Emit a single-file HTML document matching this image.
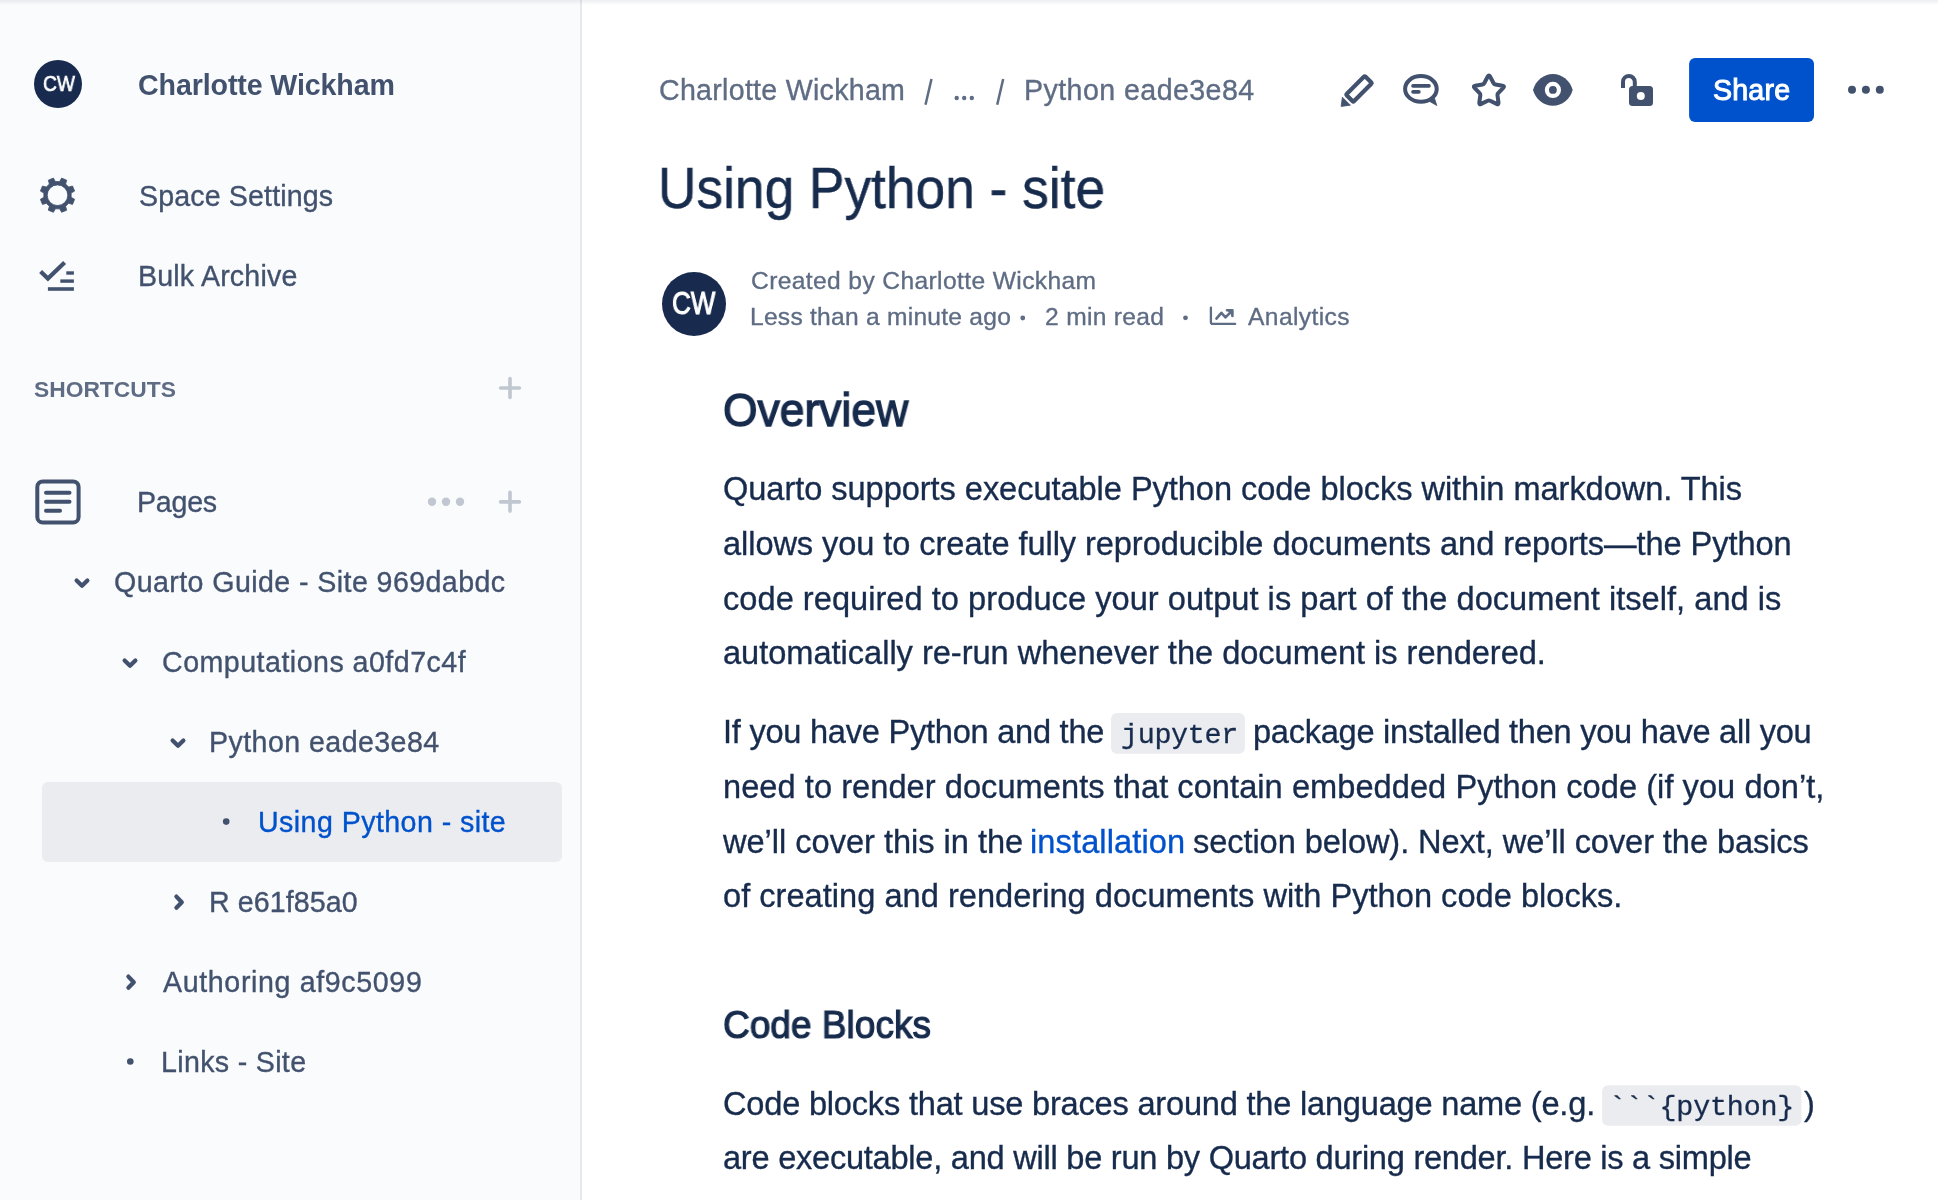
<!DOCTYPE html>
<html><head><meta charset="utf-8"><title>Using Python - site</title>
<style>
*{margin:0;padding:0;box-sizing:border-box;}
html,body{width:1938px;height:1200px;overflow:hidden;background:#fff;font-family:"Liberation Sans",sans-serif;}
.t{position:absolute;white-space:nowrap;will-change:transform;}
.bm{display:inline-block;width:0;height:0;vertical-align:baseline;}
</style></head>
<body>
<svg width="1938" height="1200" style="position:absolute;left:0;top:0">
<rect x="0" y="0" width="580" height="1200" fill="#FAFBFC"/>
<rect x="580" y="0" width="2" height="1200" fill="#E7E8E9"/>
<rect x="42" y="782" width="520" height="80" rx="6" fill="#EBECF0"/>
<circle cx="58" cy="84" r="24" fill="#182B4E"/>
<path d="M71.13,193.04 L74.61,191.09 L72.51,186.00 L68.66,187.09 L65.61,184.04 L66.70,180.19 L61.61,178.09 L59.66,181.57 L55.34,181.57 L53.39,178.09 L48.30,180.19 L49.39,184.04 L46.34,187.09 L42.49,186.00 L40.39,191.09 L43.87,193.04 L43.87,197.36 L40.39,199.31 L42.49,204.40 L46.34,203.31 L49.39,206.36 L48.30,210.21 L53.39,212.31 L55.34,208.83 L59.66,208.83 L61.61,212.31 L66.70,210.21 L65.61,206.36 L68.66,203.31 L72.51,204.40 L74.61,199.31 L71.13,197.36 Z M47.20,195.20 a10.30,10.30 0 1,0 20.60,0 a10.30,10.30 0 1,0 -20.60,0 Z" fill="#42526E" fill-rule="evenodd" stroke="#42526E" stroke-width="0.8" stroke-linejoin="round"/>
<polyline points="40.6,271.6 47.9,278.6 64.6,262.6" fill="none" stroke="#42526E" stroke-width="4.2"/>
<rect x="66.3" y="271.3" width="7.6" height="3.4" fill="#42526E"/>
<rect x="60.3" y="279.4" width="13.6" height="3.4" fill="#42526E"/>
<rect x="47.9" y="287.2" width="26" height="3.6" fill="#42526E"/>
<g stroke="#C1C7D0" stroke-width="3.6" stroke-linecap="round">
<line x1="510" y1="378.6" x2="510" y2="397.4"/><line x1="500.6" y1="388" x2="519.4" y2="388"/>
<line x1="510" y1="492.3" x2="510" y2="511.1"/><line x1="500.6" y1="501.9" x2="519.4" y2="501.9"/>
</g>
<g fill="#C1C7D0"><circle cx="432" cy="501.7" r="4.2"/><circle cx="446" cy="501.7" r="4.2"/><circle cx="460" cy="501.7" r="4.2"/></g>
<rect x="37.3" y="481.4" width="41.3" height="41.1" rx="5.5" fill="none" stroke="#42526E" stroke-width="4"/>
<g stroke="#42526E" stroke-width="4" stroke-linecap="round">
<line x1="46" y1="492.8" x2="69.5" y2="492.8"/><line x1="46" y1="501.7" x2="69.5" y2="501.7"/><line x1="46" y1="510.8" x2="60" y2="510.8"/>
</g>
<g fill="none" stroke="#42526E" stroke-width="4.2" stroke-linecap="round" stroke-linejoin="round">
<polyline points="76.6,580.4 82,585.8 87.4,580.4"/>
<polyline points="124.6,660.4 130,665.8 135.4,660.4"/>
<polyline points="172.6,740.4 178,745.8 183.4,740.4"/>
<polyline points="176.4,896.6 181.8,902.2 176.4,907.8"/>
<polyline points="128.4,976.6 133.8,982.2 128.4,987.8"/>
</g>
<circle cx="226.2" cy="821.6" r="3.3" fill="#42526E"/>
<circle cx="130.3" cy="1061.5" r="3.3" fill="#42526E"/>

<rect x="1689.1" y="57.9" width="124.9" height="64.2" rx="6" fill="#0052CC"/>
<g fill="#42526E"><circle cx="1852" cy="89.7" r="4"/><circle cx="1865.9" cy="89.7" r="4"/><circle cx="1879.8" cy="89.7" r="4"/></g>
<rect x="-13.2" y="-5.1" width="26.4" height="10.2" rx="1.2" fill="none" stroke="#42526E" stroke-width="4.2" transform="translate(1359,88.9) rotate(-45)"/>
<polygon points="1342.4,97.2 1350.4,105.2 1341.1,106.4" fill="#42526E" stroke="#42526E" stroke-width="0.8" stroke-linejoin="round"/>
<ellipse cx="1420.9" cy="88.9" rx="15.8" ry="12.8" fill="none" stroke="#42526E" stroke-width="4"/>
<polygon points="1428,100.5 1436.8,105.5 1434.2,97.5" fill="#42526E" stroke="#42526E" stroke-width="0.8" stroke-linejoin="round"/>
<g stroke="#42526E" stroke-width="3.6" stroke-linecap="round"><line x1="1413" y1="85.9" x2="1429" y2="85.9"/><line x1="1413" y1="91.9" x2="1418.9" y2="91.9"/></g>
<path d="M1490.04,76.55 Q1488.90,74.40 1487.76,76.55 L1484.35,83.01 Q1483.73,84.18 1482.42,84.41 L1475.23,85.66 Q1472.83,86.08 1474.52,87.82 L1479.61,93.07 Q1480.53,94.02 1480.34,95.33 L1479.31,102.56 Q1478.97,104.97 1481.15,103.90 L1487.71,100.68 Q1488.90,100.10 1490.09,100.68 L1496.65,103.90 Q1498.83,104.97 1498.49,102.56 L1497.46,95.33 Q1497.27,94.02 1498.19,93.07 L1503.28,87.82 Q1504.97,86.08 1502.57,85.66 L1495.38,84.41 Q1494.07,84.18 1493.45,83.01 Z" fill="none" stroke="#42526E" stroke-width="4" stroke-linejoin="round"/>
<path d="M1533,90 C1535.5,81 1543.5,74.1 1552.9,74.1 C1562.3,74.1 1570.2,81 1572.7,90 C1570.2,99 1562.3,105.8 1552.9,105.8 C1543.5,105.8 1535.5,99 1533,90Z" fill="#42526E"/>
<circle cx="1552.9" cy="89.9" r="6" fill="none" stroke="#fff" stroke-width="4.2"/>
<path d="M1623,88 V81.9 A5.9,5.9 0 0 1 1634.8,81.9 V88" fill="none" stroke="#42526E" stroke-width="4"/>
<rect x="1629" y="86" width="24" height="19.9" rx="3.5" fill="#42526E"/>
<circle cx="1640.8" cy="96" r="4" fill="#fff"/>

<circle cx="694" cy="304" r="32" fill="#182B4E"/>
<g stroke="#5E6C84" stroke-width="2.5"><line x1="931.5" y1="79" x2="925.5" y2="104.8"/><line x1="1003.2" y1="79" x2="997.2" y2="104.8"/></g>
<g fill="#5E6C84"><circle cx="956.7" cy="98" r="2.2"/><circle cx="964.2" cy="98" r="2.2"/><circle cx="971.8" cy="98" r="2.2"/></g>
<circle cx="1022.75" cy="318" r="2.4" fill="#5E6C84"/><circle cx="1185.5" cy="317.8" r="2.4" fill="#5E6C84"/>
<g fill="none" stroke="#5E6C84" stroke-width="2.3" stroke-linecap="round" stroke-linejoin="round">
<path d="M1210.9,307.6 V321.9 Q1210.9,323.9 1212.9,323.9 H1235.2"/>
<polyline points="1216.4,318.6 1221.4,312.8 1225.5,317.3 1231.2,311.6" stroke-width="2.6"/>
<polyline points="1227,310.2 1232.4,310.2 1232.4,315.9" stroke-width="2.6"/>
</g>
<polygon points="1227,310.2 1232.4,310.2 1232.4,315.9" fill="#5E6C84"/>

<rect x="1111" y="713.1" width="133.9" height="40.6" rx="6" fill="#EBECF0"/>
<rect x="1602.1" y="1085.3" width="199.3" height="40.5" rx="6" fill="#EBECF0"/>
<defs><linearGradient id="tsh" x1="0" y1="0" x2="0" y2="1"><stop offset="0" stop-color="#091E42" stop-opacity="0.10"/><stop offset="1" stop-color="#091E42" stop-opacity="0"/></linearGradient></defs>
</svg>

<div id="av1" class="t" style="left:42.50px;top:73.10px;font-size:22.20px;line-height:22.20px;font-weight:400;color:#FFFFFF;letter-spacing:0.000px;font-family:'Liberation Sans',sans-serif;-webkit-text-stroke:0.70px #FFFFFF;transform:scaleX(0.8663);transform-origin:0 0">CW<span class="bm"></span></div>
<div id="av2" class="t" style="left:672.10px;top:288.01px;font-size:30.60px;line-height:30.60px;font-weight:400;color:#FFFFFF;letter-spacing:0.000px;font-family:'Liberation Sans',sans-serif;-webkit-text-stroke:1.00px #FFFFFF;transform:scaleX(0.8523);transform-origin:0 0">CW<span class="bm"></span></div>
<div id="sb_name" class="t" style="left:138.00px;top:71.10px;font-size:28.60px;line-height:28.60px;font-weight:700;color:#42526E;letter-spacing:-0.112px;font-family:'Liberation Sans',sans-serif">Charlotte Wickham<span class="bm"></span></div>
<div id="sb_space" class="t" style="left:138.50px;top:182.10px;font-size:28.60px;line-height:28.60px;font-weight:400;color:#42526E;letter-spacing:0.138px;font-family:'Liberation Sans',sans-serif;-webkit-text-stroke:0.35px #42526E">Space Settings<span class="bm"></span></div>
<div id="sb_bulk" class="t" style="left:138.00px;top:262.00px;font-size:28.60px;line-height:28.60px;font-weight:400;color:#42526E;letter-spacing:0.182px;font-family:'Liberation Sans',sans-serif;-webkit-text-stroke:0.35px #42526E">Bulk Archive<span class="bm"></span></div>
<div id="sb_short" class="t" style="left:34.00px;top:377.60px;font-size:22.80px;line-height:22.80px;font-weight:700;color:#5E6C84;letter-spacing:0.000px;font-family:'Liberation Sans',sans-serif">SHORTCUTS<span class="bm"></span></div>
<div id="sb_pages" class="t" style="left:136.50px;top:488.10px;font-size:28.60px;line-height:28.60px;font-weight:400;color:#42526E;letter-spacing:-0.250px;font-family:'Liberation Sans',sans-serif;-webkit-text-stroke:0.35px #42526E">Pages<span class="bm"></span></div>
<div id="sb_q" class="t" style="left:114.00px;top:568.00px;font-size:28.60px;line-height:28.60px;font-weight:400;color:#42526E;letter-spacing:0.415px;font-family:'Liberation Sans',sans-serif;-webkit-text-stroke:0.35px #42526E">Quarto Guide - Site 969dabdc<span class="bm"></span></div>
<div id="sb_comp" class="t" style="left:161.50px;top:647.60px;font-size:28.60px;line-height:28.60px;font-weight:400;color:#42526E;letter-spacing:0.480px;font-family:'Liberation Sans',sans-serif;-webkit-text-stroke:0.35px #42526E">Computations a0fd7c4f<span class="bm"></span></div>
<div id="sb_py" class="t" style="left:209.00px;top:727.81px;font-size:28.60px;line-height:28.60px;font-weight:400;color:#42526E;letter-spacing:0.429px;font-family:'Liberation Sans',sans-serif;-webkit-text-stroke:0.35px #42526E">Python eade3e84<span class="bm"></span></div>
<div id="sb_using" class="t" style="left:257.50px;top:808.41px;font-size:28.60px;line-height:28.60px;font-weight:400;color:#0052CC;letter-spacing:0.433px;font-family:'Liberation Sans',sans-serif;-webkit-text-stroke:0.35px #0052CC">Using Python - site<span class="bm"></span></div>
<div id="sb_r" class="t" style="left:209.00px;top:887.91px;font-size:28.60px;line-height:28.60px;font-weight:400;color:#42526E;letter-spacing:0.089px;font-family:'Liberation Sans',sans-serif;-webkit-text-stroke:0.35px #42526E">R e61f85a0<span class="bm"></span></div>
<div id="sb_auth" class="t" style="left:163.00px;top:968.00px;font-size:28.60px;line-height:28.60px;font-weight:400;color:#42526E;letter-spacing:0.635px;font-family:'Liberation Sans',sans-serif;-webkit-text-stroke:0.35px #42526E">Authoring af9c5099<span class="bm"></span></div>
<div id="sb_links" class="t" style="left:161.00px;top:1048.21px;font-size:28.60px;line-height:28.60px;font-weight:400;color:#42526E;letter-spacing:0.327px;font-family:'Liberation Sans',sans-serif;-webkit-text-stroke:0.35px #42526E">Links - Site<span class="bm"></span></div>
<div id="cr1" class="t" style="left:658.50px;top:75.91px;font-size:28.60px;line-height:28.60px;font-weight:400;color:#5E6C84;letter-spacing:0.275px;font-family:'Liberation Sans',sans-serif;-webkit-text-stroke:0.35px #5E6C84">Charlotte Wickham<span class="bm"></span></div>
<div id="cr2" class="t" style="left:1023.50px;top:75.91px;font-size:28.60px;line-height:28.60px;font-weight:400;color:#5E6C84;letter-spacing:0.429px;font-family:'Liberation Sans',sans-serif;-webkit-text-stroke:0.35px #5E6C84">Python eade3e84<span class="bm"></span></div>
<div id="share" class="t" style="left:1713.00px;top:76.21px;font-size:28.60px;line-height:28.60px;font-weight:400;color:#FFFFFF;letter-spacing:0.200px;font-family:'Liberation Sans',sans-serif;-webkit-text-stroke:1.00px #FFFFFF">Share<span class="bm"></span></div>
<div id="title" class="t" style="left:657.50px;top:160.21px;font-size:57.20px;line-height:57.20px;font-weight:400;color:#172B4D;letter-spacing:0.000px;font-family:'Liberation Sans',sans-serif;-webkit-text-stroke:0.50px #172B4D;transform:scaleX(0.9314);transform-origin:0 0">Using Python - site<span class="bm"></span></div>
<div id="meta1" class="t" style="left:750.50px;top:268.81px;font-size:24.60px;line-height:24.60px;font-weight:400;color:#5E6C84;letter-spacing:0.378px;font-family:'Liberation Sans',sans-serif;-webkit-text-stroke:0.35px #5E6C84">Created by Charlotte Wickham<span class="bm"></span></div>
<div id="meta2" class="t" style="left:750.00px;top:305.01px;font-size:24.60px;line-height:24.60px;font-weight:400;color:#5E6C84;letter-spacing:0.248px;font-family:'Liberation Sans',sans-serif;-webkit-text-stroke:0.35px #5E6C84">Less than a minute ago<span class="bm"></span></div>
<div id="meta3" class="t" style="left:1045.00px;top:305.21px;font-size:24.60px;line-height:24.60px;font-weight:400;color:#5E6C84;letter-spacing:0.311px;font-family:'Liberation Sans',sans-serif;-webkit-text-stroke:0.35px #5E6C84">2 min read<span class="bm"></span></div>
<div id="meta4" class="t" style="left:1248.00px;top:305.01px;font-size:24.60px;line-height:24.60px;font-weight:400;color:#5E6C84;letter-spacing:0.400px;font-family:'Liberation Sans',sans-serif;-webkit-text-stroke:0.35px #5E6C84">Analytics<span class="bm"></span></div>
<div id="h_over" class="t" style="left:722.50px;top:386.10px;font-size:47.00px;line-height:47.00px;font-weight:400;color:#172B4D;letter-spacing:0.000px;font-family:'Liberation Sans',sans-serif;-webkit-text-stroke:1.40px #172B4D;transform:scaleX(0.9453);transform-origin:0 0">Overview<span class="bm"></span></div>
<div id="p1" class="t" style="left:723.00px;top:473.31px;font-size:32.60px;line-height:32.60px;font-weight:400;color:#172B4D;letter-spacing:-0.052px;font-family:'Liberation Sans',sans-serif;-webkit-text-stroke:0.35px #172B4D">Quarto supports executable Python code blocks within markdown. This<span class="bm"></span></div>
<div id="p2" class="t" style="left:723.00px;top:528.01px;font-size:32.60px;line-height:32.60px;font-weight:400;color:#172B4D;letter-spacing:-0.073px;font-family:'Liberation Sans',sans-serif;-webkit-text-stroke:0.35px #172B4D">allows you to create fully reproducible documents and reports—the Python<span class="bm"></span></div>
<div id="p3" class="t" style="left:723.00px;top:582.70px;font-size:32.60px;line-height:32.60px;font-weight:400;color:#172B4D;letter-spacing:0.035px;font-family:'Liberation Sans',sans-serif;-webkit-text-stroke:0.35px #172B4D">code required to produce your output is part of the document itself, and is<span class="bm"></span></div>
<div id="p4" class="t" style="left:723.00px;top:637.40px;font-size:32.60px;line-height:32.60px;font-weight:400;color:#172B4D;letter-spacing:-0.019px;font-family:'Liberation Sans',sans-serif;-webkit-text-stroke:0.35px #172B4D">automatically re-run whenever the document is rendered.<span class="bm"></span></div>
<div id="p5a" class="t" style="left:723.00px;top:716.01px;font-size:32.60px;line-height:32.60px;font-weight:400;color:#172B4D;letter-spacing:-0.248px;font-family:'Liberation Sans',sans-serif;-webkit-text-stroke:0.35px #172B4D">If you have Python and the<span class="bm"></span></div>
<div id="p5b" class="t" style="left:1253.00px;top:716.01px;font-size:32.60px;line-height:32.60px;font-weight:400;color:#172B4D;letter-spacing:-0.263px;font-family:'Liberation Sans',sans-serif;-webkit-text-stroke:0.35px #172B4D">package installed then you have all you<span class="bm"></span></div>
<div id="p6" class="t" style="left:723.00px;top:770.81px;font-size:32.60px;line-height:32.60px;font-weight:400;color:#172B4D;letter-spacing:0.053px;font-family:'Liberation Sans',sans-serif;-webkit-text-stroke:0.35px #172B4D">need to render documents that contain embedded Python code (if you don’t,<span class="bm"></span></div>
<div id="p7a" class="t" style="left:723.00px;top:825.51px;font-size:32.60px;line-height:32.60px;font-weight:400;color:#172B4D;letter-spacing:-0.018px;font-family:'Liberation Sans',sans-serif;-webkit-text-stroke:0.35px #172B4D">we’ll cover this in the<span class="bm"></span></div>
<div id="p7b" class="t" style="left:1030.00px;top:825.51px;font-size:32.60px;line-height:32.60px;font-weight:400;color:#0052CC;letter-spacing:0.109px;font-family:'Liberation Sans',sans-serif;-webkit-text-stroke:0.35px #0052CC">installation<span class="bm"></span></div>
<div id="p7c" class="t" style="left:1193.00px;top:825.51px;font-size:32.60px;line-height:32.60px;font-weight:400;color:#172B4D;letter-spacing:-0.079px;font-family:'Liberation Sans',sans-serif;-webkit-text-stroke:0.35px #172B4D">section below). Next, we’ll cover the basics<span class="bm"></span></div>
<div id="p8" class="t" style="left:723.00px;top:880.20px;font-size:32.60px;line-height:32.60px;font-weight:400;color:#172B4D;letter-spacing:0.020px;font-family:'Liberation Sans',sans-serif;-webkit-text-stroke:0.35px #172B4D">of creating and rendering documents with Python code blocks.<span class="bm"></span></div>
<div id="h_code" class="t" style="left:722.50px;top:1004.51px;font-size:39.00px;line-height:39.00px;font-weight:400;color:#172B4D;letter-spacing:0.000px;font-family:'Liberation Sans',sans-serif;-webkit-text-stroke:1.20px #172B4D;transform:scaleX(0.9498);transform-origin:0 0">Code Blocks<span class="bm"></span></div>
<div id="p9a" class="t" style="left:723.00px;top:1087.70px;font-size:32.60px;line-height:32.60px;font-weight:400;color:#172B4D;letter-spacing:-0.204px;font-family:'Liberation Sans',sans-serif;-webkit-text-stroke:0.35px #172B4D">Code blocks that use braces around the language name (e.g.<span class="bm"></span></div>
<div id="p9b" class="t" style="left:1804.00px;top:1087.70px;font-size:32.60px;line-height:32.60px;font-weight:400;color:#172B4D;letter-spacing:0.000px;font-family:'Liberation Sans',sans-serif;-webkit-text-stroke:0.35px #172B4D">)<span class="bm"></span></div>
<div id="p10" class="t" style="left:723.00px;top:1141.70px;font-size:32.60px;line-height:32.60px;font-weight:400;color:#172B4D;letter-spacing:-0.250px;font-family:'Liberation Sans',sans-serif;-webkit-text-stroke:0.35px #172B4D">are executable, and will be run by Quarto during render. Here is a simple<span class="bm"></span></div>
<div id="code1" class="t" style="left:1121.00px;top:721.81px;font-size:28.40px;line-height:28.40px;font-weight:400;color:#172B4D;letter-spacing:-0.333px;font-family:'Liberation Mono',monospace;-webkit-text-stroke:0.30px #172B4D">jupyter<span class="bm"></span></div>
<div id="code2" class="t" style="left:1609.00px;top:1093.70px;font-size:28.40px;line-height:28.40px;font-weight:400;color:#172B4D;letter-spacing:-0.200px;font-family:'Liberation Mono',monospace;-webkit-text-stroke:0.30px #172B4D">```{python}<span class="bm"></span></div>
<div style="position:absolute;left:0;top:0;width:1938px;height:5px;background:linear-gradient(to bottom,rgba(9,30,66,0.075),rgba(9,30,66,0))"></div>
</body></html>
